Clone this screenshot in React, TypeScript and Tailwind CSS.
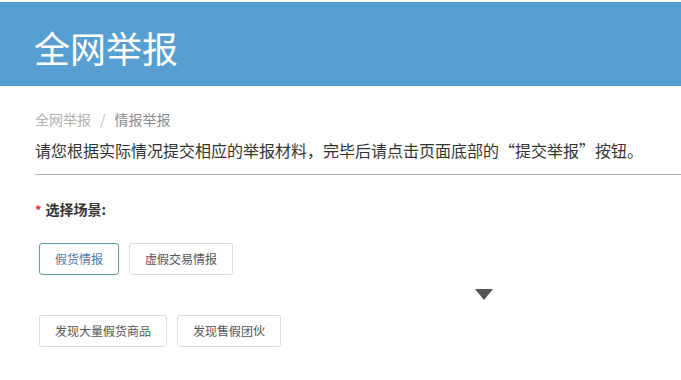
// 全网举报 · 情报举报页面
const ROW_ONE = [
  { label: "假货情报", active: true },
  { label: "虚假交易情报", active: false },
];

const ROW_TWO = ["发现大量假货商品", "发现售假团伙"];

export default function App() {
  return (
    <div className="relative w-[681px] h-[380px] overflow-hidden bg-white pt-[2px] font-['Noto_Sans_CJK_SC','Noto_Sans',sans-serif]">
      {/* 顶部色带 */}
      <header className="h-[84px] bg-[#579fd0] flex items-center pl-[34px] pt-[5px]">
        <h1 className="text-[36px] leading-none text-white">全网举报</h1>
      </header>

      <div className="pl-[35px]">
        {/* 面包屑 */}
        <nav className="mt-[23px] flex items-center text-[14px] leading-[20px]">
          <span className="text-[#b0b0b0]">全网举报</span>
          <span className="mx-[9px] text-[#c0c0c0]">/</span>
          <span className="text-[#8a8a8a]">情报举报</span>
        </nav>

        <div className="border-b border-[#b4b4b4] pt-[9px] pb-[12px]">
          <p className="text-[16px] leading-[24px] text-[#333]">
            请您根据实际情况提交相应的举报材料，完毕后请点击页面底部的“提交举报”按钮。
          </p>
        </div>

        <div className="mt-[22px] flex items-center text-[14px] leading-[20px]">
          <span className="text-[#d9363e] text-[13px] font-bold mr-[4px] pt-[3px]">*</span>
          <span className="font-bold text-[#333]">选择场景:</span>
        </div>

        {/* 场景按钮 */}
        <div className="mt-[23px] pl-[4px] flex gap-[10px]">
          {ROW_ONE.map((b) => (
            <button
              key={b.label}
              className={
                b.active
                  ? "h-[32px] px-[15px] rounded-[3px] border border-[#5f9ea8] text-[12px] text-[#4f7ba8]"
                  : "h-[32px] px-[15px] rounded-[3px] border border-[#dcdcdc] text-[12px] text-[#555]"
              }
            >
              {b.label}
            </button>
          ))}
        </div>

        <div className="mt-[40px] pl-[4px] flex gap-[10px]">
          {ROW_TWO.map((label) => (
            <button
              key={label}
              className="h-[32px] px-[15px] rounded-[3px] border border-[#dcdcdc] text-[12px] text-[#555]"
            >
              {label}
            </button>
          ))}
        </div>
      </div>

      {/* 下拉指示三角 */}
      <svg
        className="absolute left-[475px] top-[289px]"
        width="18"
        height="11"
        viewBox="0 0 18 11"
      >
        <polygon points="0,0 18,0 9,11" fill="#555" />
      </svg>
    </div>
  );
}
